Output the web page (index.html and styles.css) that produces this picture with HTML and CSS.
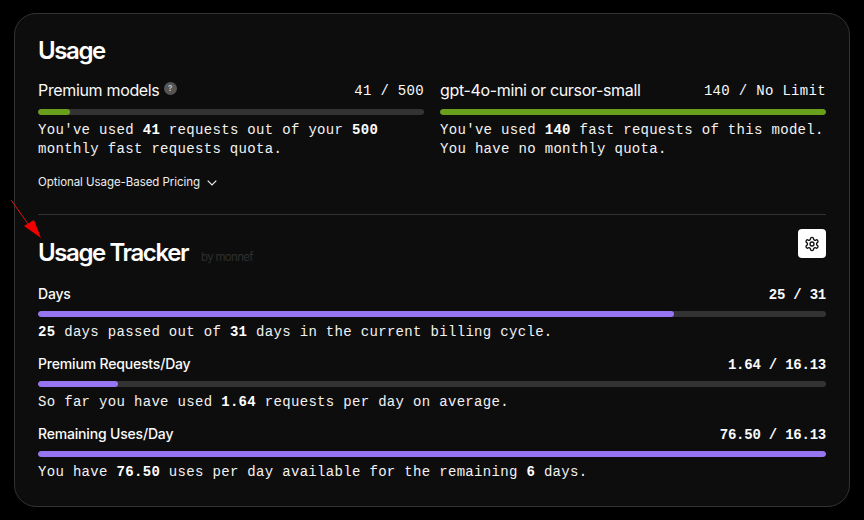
FILE: index.html
```html
<!DOCTYPE html>
<html lang="en">
<head>
<meta charset="utf-8">
<title>Usage</title>
<link rel="stylesheet" href="styles.css">
</head>
<body>
<main class="card">
  <h2 class="title">Usage</h2>
  <section class="columns">
    <div class="meter">
      <div class="meter-head">
        <span class="label label-lg">Premium models <span class="help">?</span></span>
        <span class="value">41 / 500</span>
      </div>
      <div class="track"><div class="fill green" style="width:8.2%"></div></div>
      <p class="desc">You've used <b>41</b> requests out of your <b>500</b> monthly fast requests quota.</p>
    </div>
    <div class="meter">
      <div class="meter-head">
        <span class="label label-lg">gpt-4o-mini or cursor-small</span>
        <span class="value">140 / No Limit</span>
      </div>
      <div class="track"><div class="fill green" style="width:100%"></div></div>
      <p class="desc">You've used <b>140</b> fast requests of this model. You have no monthly quota.</p>
    </div>
  </section>
  <div class="optional">
    <span>Optional Usage-Based Pricing</span>
    <svg class="chev" viewBox="0 0 10 6" width="10" height="6"><path d="M.7.7 5 5 9.3.7" fill="none" stroke="currentColor" stroke-width="1.2"/></svg>
  </div>
  <hr class="divider">
  <header class="tracker-head">
    <div class="tracker-title"><h2 class="title">Usage Tracker</h2><span class="by">by monnef</span></div>
    <button class="gear" type="button" aria-label="Settings">
      <svg viewBox="0 0 24 24" width="16" height="16" fill="none" stroke="#111" stroke-width="2" stroke-linecap="round" stroke-linejoin="round"><path d="M12.22 2h-.44a2 2 0 0 0-2 2v.18a2 2 0 0 1-1 1.73l-.43.25a2 2 0 0 1-2 0l-.15-.08a2 2 0 0 0-2.73.73l-.22.38a2 2 0 0 0 .73 2.73l.15.1a2 2 0 0 1 1 1.72v.51a2 2 0 0 1-1 1.74l-.15.09a2 2 0 0 0-.73 2.73l.22.38a2 2 0 0 0 2.73.73l.15-.08a2 2 0 0 1 2 0l.43.25a2 2 0 0 1 1 1.73V20a2 2 0 0 0 2 2h.44a2 2 0 0 0 2-2v-.18a2 2 0 0 1 1-1.73l.43-.25a2 2 0 0 1 2 0l.15.08a2 2 0 0 0 2.73-.73l.22-.39a2 2 0 0 0-.73-2.73l-.15-.08a2 2 0 0 1-1-1.74v-.5a2 2 0 0 1 1-1.74l.15-.09a2 2 0 0 0 .73-2.73l-.22-.38a2 2 0 0 0-2.73-.73l-.15.08a2 2 0 0 1-2 0l-.43-.25a2 2 0 0 1-1-1.73V4a2 2 0 0 0-2-2z"/><circle cx="12" cy="12" r="3"/></svg>
    </button>
  </header>
  <section class="stack">
    <div class="meter">
      <div class="meter-head small">
        <span class="label">Days</span>
        <span class="value strong">25 / 31</span>
      </div>
      <div class="track"><div class="fill purple" style="width:80.65%"></div></div>
      <p class="desc"><b>25</b> days passed out of <b>31</b> days in the current billing cycle.</p>
    </div>
    <div class="meter">
      <div class="meter-head small">
        <span class="label">Premium Requests/Day</span>
        <span class="value strong">1.64 / 16.13</span>
      </div>
      <div class="track"><div class="fill purple" style="width:10.17%"></div></div>
      <p class="desc">So far you have used <b>1.64</b> requests per day on average.</p>
    </div>
    <div class="meter">
      <div class="meter-head small">
        <span class="label">Remaining Uses/Day</span>
        <span class="value strong">76.50 / 16.13</span>
      </div>
      <div class="track"><div class="fill purple" style="width:100%"></div></div>
      <p class="desc">You have <b>76.50</b> uses per day available for the remaining <b>6</b> days.</p>
    </div>
  </section>
</main>
<svg class="arrow" viewBox="0 0 40 50" width="40" height="50"><line x1="11" y1="200" x2="31" y2="228" transform="translate(0 -190)" stroke="#e01010" stroke-width="1"/><polygon points="41,238 24,226 34,220" transform="translate(0 -190)" fill="#f00000"/></svg>
</body>
</html>
```

FILE: styles.css
```css
* { box-sizing: border-box; }
html, body { margin: 0; height: 100%; }
body {
  background: #000;
  color: #fafafa;
  font-family: Inter, "Liberation Sans", sans-serif;
  padding: 13px 14px;
  overflow: hidden;
  position: relative;
}
.card {
  height: 494px;
  background: #0d0d0d;
  border: 1px solid #333;
  border-radius: 22px;
  padding: 22px 23px 0;
}
.title {
  margin: 0;
  font-size: 24px;
  line-height: 30px;
  font-weight: 600;
  letter-spacing: -1.4px;
  color: #fff;
}
.columns {
  display: grid;
  grid-template-columns: 1fr 1fr;
  gap: 16px;
  margin-top: 13px;
}
.meter-head {
  display: flex;
  justify-content: space-between;
  align-items: center;
  height: 24px;
  margin-bottom: 6px;
}
.meter-head.small { margin-bottom: 5px; }
.small .label { padding-bottom: 2px; }
.small .value { padding-top: 2px; }
.label {
  font-size: 14px;
  font-weight: 500;
  letter-spacing: -0.18px;
}
.label-lg {
  font-size: 16px;
  font-weight: 400;
  letter-spacing: -0.34px;
  padding-bottom: 2px;
}
.help {
  display: inline-block;
  width: 13px;
  height: 13px;
  border-radius: 50%;
  background: #555;
  color: #ccc;
  font-size: 8px;
  line-height: 13px;
  letter-spacing: 0;
  text-align: center;
  vertical-align: 5px;
  font-weight: 600;
}
.value, .desc {
  font-family: "Liberation Mono", monospace;
  font-size: 14px;
  letter-spacing: 0.32px;
}
.value { font-weight: 400; }
.value.strong {
  font-weight: 700;
  letter-spacing: -0.23px;
}
.track {
  height: 6px;
  background: #333;
  border-radius: 3px;
  overflow: hidden;
}
.fill { height: 100%; border-radius: 3px; }
.green { background: #6a9f1c; }
.purple { background: #9775f2; }
.desc {
  margin: 6px 0 0;
  line-height: 19px;
  color: #f2f2f2;
}
.desc b { font-weight: 700; color: #fff; }
.optional {
  display: flex;
  align-items: center;
  gap: 7px;
  margin-top: 14px;
  font-size: 11.5px;
  letter-spacing: -0.06px;
  line-height: 18px;
  color: #eee;
}
.chev { margin-top: 1px; }
.divider {
  margin: 23px 0 0;
  border: 0;
  border-top: 1px solid #333;
}
.tracker-head {
  display: flex;
  justify-content: space-between;
  align-items: flex-start;
  margin-top: 14px;
  height: 53px;
}
.tracker-title {
  display: flex;
  align-items: baseline;
  gap: 13px;
  padding-top: 9px;
}
.by {
  font-size: 11.5px;
  letter-spacing: -0.7px;
  color: #2f2f2f;
}
.gear {
  width: 28px;
  height: 29px;
  padding: 0;
  border: 0;
  border-radius: 4px;
  background: #fff;
  display: flex;
  align-items: center;
  justify-content: center;
}
.stack { display: flex; flex-direction: column; gap: 10px; }
.arrow {
  position: absolute;
  left: 0;
  top: 190px;
  overflow: visible;
}
```
